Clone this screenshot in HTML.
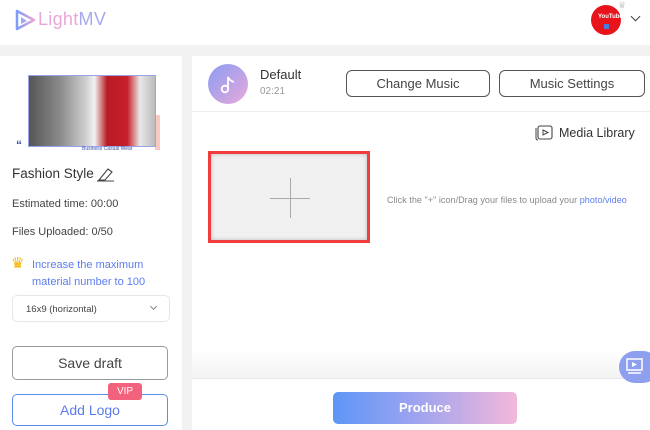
<!DOCTYPE html>
<html><head><style>
*{margin:0;padding:0;box-sizing:border-box}
body{width:650px;height:430px;overflow:hidden;background:#f2f2f2;font-family:"Liberation Sans",Arial,sans-serif;position:relative;color:#333}
.a{position:absolute}
</style></head><body>
<div class="a" style="left:0;top:0;width:650px;height:45px;background:#fff"></div>
<svg class="a" style="left:14px;top:9px" width="22" height="22" viewBox="0 0 22 22"><defs><linearGradient id="g" x1="0" x2="1"><stop offset="0" stop-color="#7b9cf7"/><stop offset="1" stop-color="#e9a6d8"/></linearGradient></defs><path d="M3 2 L3 20 L20 11 Z" fill="none" stroke="url(#g)" stroke-width="2.5" stroke-linejoin="round"/><path d="M7 8 L7 15 L13 12 Z" fill="#9fa9f0"/></svg>
<div class="a" style="left:38px;top:9px;font-size:18px;color:#e9a6d8;letter-spacing:0.3px">Light<span style="color:#a9a8ef">MV</span></div>
<div class="a" style="left:591px;top:5px;width:30px;height:30px;border-radius:50%;background:#e8141c"></div>
<div class="a" style="left:598px;top:14px;font-size:6px;color:#fff;font-weight:bold">YouTube</div>
<div class="a" style="left:604px;top:24px;width:5px;height:5px;background:#4a7fe0"></div>
<div class="a" style="left:618px;top:0px;width:12px;height:8px;color:#ccc;font-size:9px">♛</div>
<div class="a" style="left:632px;top:13px;width:7px;height:7px;border-right:1.5px solid #444;border-bottom:1.5px solid #444;transform:rotate(45deg)"></div>

<div class="a" style="left:0;top:56px;width:182px;height:374px;background:#fff"></div>
<div class="a" style="left:155px;top:115px;width:5px;height:35px;background:#f7c9c0"></div>
<div class="a" style="left:28px;top:75px;width:128px;height:72px;background:linear-gradient(90deg,#555 0,#8c8c8c 25%,#cfcfcf 45%,#f2f2f2 52%,#b71c24 62%,#c8202a 78%,#e8e8e8 88%,#bbb);border:1px solid #9aa2e8"></div>
<div class="a" style="left:16px;top:138px;font-size:12px;color:#3b4fa8;font-weight:bold">“</div>
<div class="a" style="left:82px;top:146px;font-size:5px;color:#3b4fa8">Business Casual Wear</div>
<div class="a" style="left:12px;top:166px;font-size:13.5px;color:#333">Fashion Style</div>
<svg class="a" style="left:96px;top:165px" width="20" height="17" viewBox="0 0 20 17"><path d="M3 15 L12 4 L16 7 L9 15 Z M1 16 H18" fill="none" stroke="#444" stroke-width="1.1"/></svg>
<div class="a" style="left:12px;top:198px;font-size:11px;color:#444">Estimated time: 00:00</div>
<div class="a" style="left:12px;top:226px;font-size:11px;color:#444">Files Uploaded: 0/50</div>
<div class="a" style="left:11px;top:254px;font-size:15px;color:#f4b400">♛</div>
<div class="a" style="left:32px;top:257px;font-size:11px;color:#5b7cf0;line-height:17px">Increase the maximum<br>material number to 100</div>
<div class="a" style="left:12px;top:295px;width:158px;height:27px;border:1px solid #e6e6e6;border-radius:5px;font-size:9.5px;color:#444;padding:8px 0 0 13px">16x9 (horizontal)</div>
<div class="a" style="left:151px;top:304px;width:5px;height:5px;border-right:1px solid #888;border-bottom:1px solid #888;transform:rotate(45deg)"></div>
<div class="a" style="left:12px;top:346px;width:156px;height:34px;border:1px solid #999;border-radius:5px;font-size:14px;color:#444;text-align:center;line-height:32px">Save draft</div>
<div class="a" style="left:12px;top:394px;width:156px;height:32px;border:1px solid #5b8def;border-radius:5px;font-size:14px;color:#5b7cf0;text-align:center;line-height:30px">Add Logo</div>
<div class="a" style="left:108px;top:383px;width:34px;height:17px;background:#f2627c;border-radius:3px;color:#fff;font-size:10px;text-align:center;line-height:17px">VIP</div>

<div class="a" style="left:192px;top:56px;width:458px;height:374px;background:#fff"></div>
<div class="a" style="left:192px;top:111px;width:458px;height:1px;background:#eee"></div>
<div class="a" style="left:208px;top:64px;width:40px;height:40px;border-radius:50%;background:linear-gradient(135deg,#8b9cf2,#e7a9dc)"></div>
<svg class="a" style="left:216px;top:72px" width="24" height="24" viewBox="0 0 24 24"><circle cx="9" cy="17" r="3.3" fill="none" stroke="#fff" stroke-width="1.8"/><path d="M12 17 V5 Q14 9 18 10" fill="none" stroke="#fff" stroke-width="1.8"/></svg>
<div class="a" style="left:260px;top:67px;font-size:13px;color:#333">Default</div>
<div class="a" style="left:260px;top:86px;font-size:10px;color:#999">02:21</div>
<div class="a" style="left:346px;top:70px;width:144px;height:27px;border:1px solid #555;border-radius:6px;font-size:13px;color:#444;text-align:center;line-height:25px">Change Music</div>
<div class="a" style="left:499px;top:70px;width:146px;height:27px;border:1px solid #555;border-radius:6px;font-size:13px;color:#444;text-align:center;line-height:25px">Music Settings</div>
<svg class="a" style="left:535px;top:124px" width="20" height="18" viewBox="0 0 20 18"><rect x="3" y="2" width="14" height="13" rx="2" fill="none" stroke="#444" stroke-width="1.1"/><path d="M1 4 V14 Q1 16 3 16" fill="none" stroke="#444"/><path d="M8 6 L13 8.5 L8 11 Z" fill="none" stroke="#444"/></svg>
<div class="a" style="left:559px;top:126px;font-size:12.5px;color:#333">Media Library</div>
<div class="a" style="left:208px;top:151px;width:162px;height:92px;border:3px solid #f23d3d;background:#f0f0f0;box-shadow:inset 0 0 4px #bbb"></div>
<div class="a" style="left:270px;top:198px;width:40px;height:1px;background:#aaa"></div>
<div class="a" style="left:290px;top:178px;width:1px;height:40px;background:#aaa"></div>
<div class="a" style="left:387px;top:195px;font-size:9px;color:#888;white-space:nowrap;letter-spacing:0.05px">Click the "+" icon/Drag your files to upload your <span style="color:#5b7cf0">photo/video</span></div>
<div class="a" style="left:192px;top:350px;width:458px;height:28px;background:linear-gradient(#fff,#f3f3f3)"></div>
<div class="a" style="left:192px;top:378px;width:458px;height:1px;background:#e8e8e8"></div>
<div class="a" style="left:619px;top:351px;width:40px;height:32px;border-radius:16px;background:#8f9ff0"></div>
<svg class="a" style="left:625px;top:357px" width="22" height="20" viewBox="0 0 22 20"><rect x="2" y="2" width="15" height="11" fill="none" stroke="#fff" stroke-width="1.5"/><path d="M7 5 L12 7.5 L7 10 Z" fill="#fff"/><path d="M3 16 H16" stroke="#fff" stroke-width="1.5"/></svg>
<div class="a" style="left:333px;top:392px;width:184px;height:32px;border-radius:5px;background:linear-gradient(90deg,#5d96f7,#a5a5ee 50%,#f3b8d9);color:#fff;font-size:13px;font-weight:bold;text-align:center;line-height:32px">Produce</div>
</body></html>
